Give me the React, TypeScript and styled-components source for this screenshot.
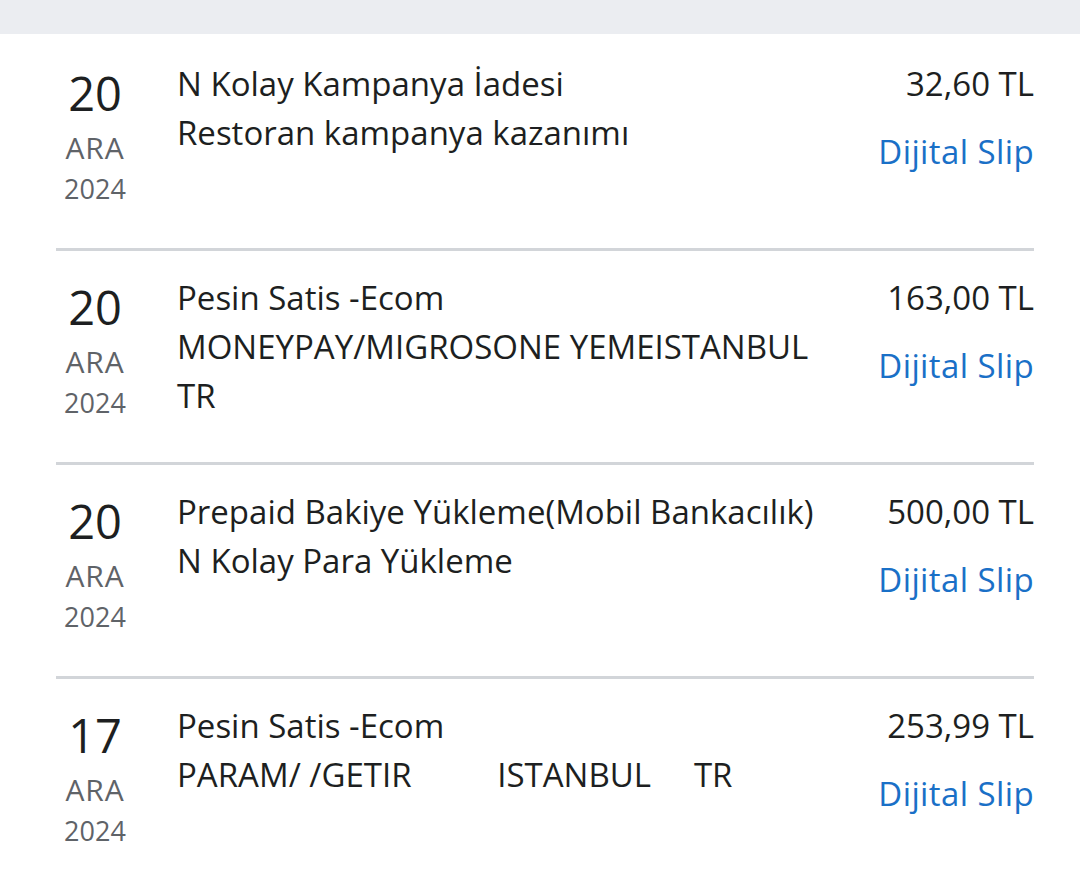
import React from "react";
import styled, { createGlobalStyle } from "styled-components";

const Global = createGlobalStyle`
  html, body { margin: 0; padding: 0; background: #ffffff; }
  body { font-family: "Open Sans", "Noto Sans", sans-serif; -webkit-font-smoothing: antialiased; }
`;

const Page = styled.div`
  width: 1080px;
  min-height: 874px;
  background: #ffffff;
  overflow: hidden;
`;

const TopBar = styled.div`
  height: 34px;
  background: #ebedf1;
`;

const List = styled.div`
  display: flex;
  flex-direction: column;
  padding: 3px 46px 0 56px;
`;

const Row = styled.div`
  display: grid;
  grid-template-columns: 78px 1fr auto;
  column-gap: 43px;
  padding-top: 22px;
  height: 189px;
  box-sizing: content-box;
  border-bottom: 3px solid #d2d5d9;
`;

const DateCol = styled.div`
  display: flex;
  flex-direction: column;
  align-items: center;
  padding-top: 6px;
`;

const Day = styled.div`
  font-size: 47px;
  line-height: 56px;
  color: #1d1f21;
`;

const Month = styled.div`
  font-size: 30px;
  line-height: 46px;
  margin-top: 4px;
  letter-spacing: 0.8px;
  color: #5f6368;
`;

const Year = styled.div`
  font-size: 27px;
  line-height: 36px;
  color: #5f6368;
`;

const TextCol = styled.div`
  display: flex;
  flex-direction: column;
  min-width: 0;
`;

const Line = styled.div`
  font-size: 33px;
  line-height: 49px;
  color: #1d1f21;
  white-space: pre;
`;

const AmountCol = styled.div`
  display: flex;
  flex-direction: column;
  align-items: flex-end;
`;

const Amount = styled.div`
  font-size: 33px;
  line-height: 49px;
  color: #1d1f21;
  white-space: nowrap;
`;

const SlipLink = styled.a`
  margin-top: 19px;
  font-size: 33px;
  line-height: 49px;
  letter-spacing: 0.4px;
  color: #1a70c7;
  text-decoration: none;
  white-space: nowrap;
`;

type Tx = { day: string; month: string; year: string; lines: string[]; amount: string };

const data: Tx[] = [
  { day: "20", month: "ARA", year: "2024", lines: ["N Kolay Kampanya İadesi", "Restoran kampanya kazanımı"], amount: "32,60 TL" },
  { day: "20", month: "ARA", year: "2024", lines: ["Pesin Satis -Ecom", "MONEYPAY/MIGROSONE YEMEISTANBUL", "TR"], amount: "163,00 TL" },
  { day: "20", month: "ARA", year: "2024", lines: ["Prepaid Bakiye Yükleme(Mobil Bankacılık)", "N Kolay Para Yükleme"], amount: "500,00 TL" },
  { day: "17", month: "ARA", year: "2024", lines: ["Pesin Satis -Ecom", "PARAM/ /GETIR          ISTANBUL     TR"], amount: "253,99 TL" },
];

export default function App() {
  return (
    <Page>
      <Global />
      <TopBar />
      <List>
        {data.map((t, i) => (
          <Row key={i}>
            <DateCol>
              <Day>{t.day}</Day>
              <Month>{t.month}</Month>
              <Year>{t.year}</Year>
            </DateCol>
            <TextCol>
              {t.lines.map((l, j) => (
                <Line key={j}>{l}</Line>
              ))}
            </TextCol>
            <AmountCol>
              <Amount>{t.amount}</Amount>
              <SlipLink href="#">Dijital Slip</SlipLink>
            </AmountCol>
          </Row>
        ))}
      </List>
    </Page>
  );
}
